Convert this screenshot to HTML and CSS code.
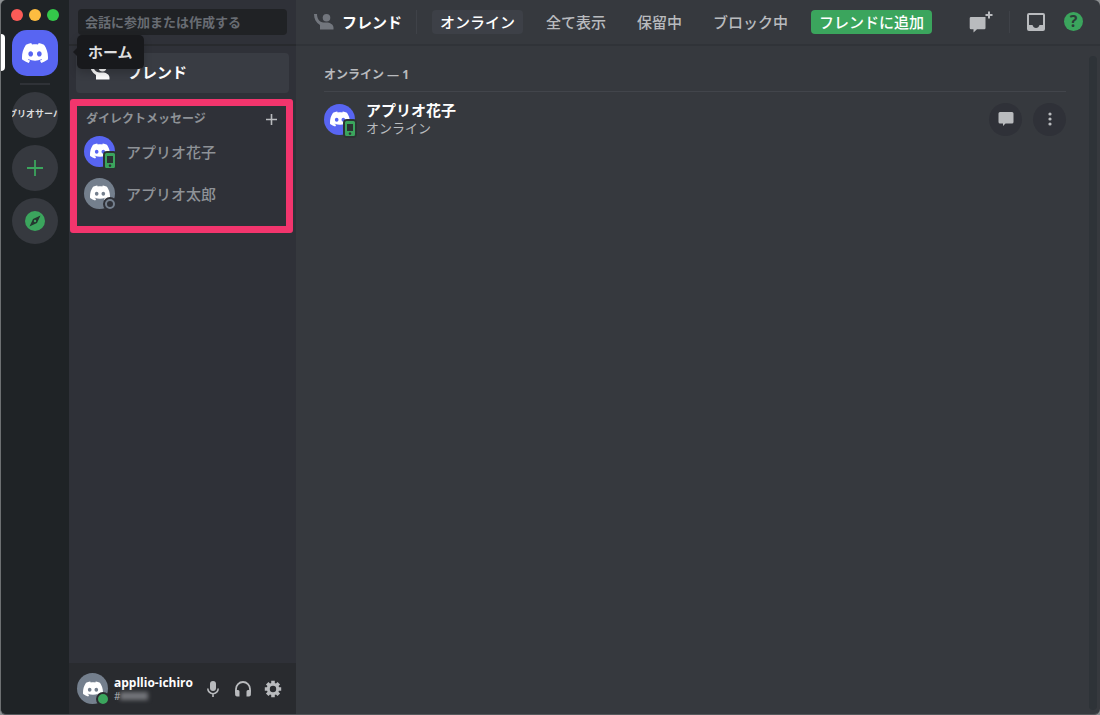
FILE: index.html
```html
<!DOCTYPE html>
<html lang="ja">
<head>
    <meta charset="UTF-8">
    <meta name="viewport" content="width=device-width, initial-scale=1.0">
    <title>フレンド</title>
    <link rel="stylesheet" href="styles.css">
</head>
<body>
    <svg class="symbols" aria-hidden="true">
        <symbol id="logo" viewBox="0 0 24 24">
            <path fill="currentColor" d="M20.317 4.3698a19.7913 19.7913 0 00-4.8851-1.5152.0741.0741 0 00-.0785.0371c-.211.3753-.4447.8648-.6083 1.2495-1.8447-.2762-3.68-.2762-5.4868 0-.1636-.3933-.4058-.8742-.6177-1.2495a.077.077 0 00-.0785-.037 19.7363 19.7363 0 00-4.8852 1.515.0699.0699 0 00-.0321.0277C.5334 9.0458-.319 13.5799.0992 18.0578a.0824.0824 0 00.0312.0561c2.0528 1.5076 4.0413 2.4228 5.9929 3.0294a.0777.0777 0 00.0842-.0276c.4616-.6304.8731-1.2952 1.226-1.9942a.076.076 0 00-.0416-.1057c-.6528-.2476-1.2743-.5495-1.8722-.8923a.077.077 0 01-.0076-.1277c.1258-.0943.2517-.1923.3718-.2914a.0743.0743 0 01.0776-.0105c3.9278 1.7933 8.18 1.7933 12.0614 0a.0739.0739 0 01.0785.0095c.1202.099.246.1981.3728.2924a.077.077 0 01-.0066.1276 12.2986 12.2986 0 01-1.873.8914.0766.0766 0 00-.0407.1067c.3604.698.7719 1.3628 1.225 1.9932a.076.076 0 00.0842.0286c1.961-.6067 3.9495-1.5219 6.0023-3.0294a.077.077 0 00.0313-.0552c.5004-5.177-.8382-9.6739-3.5485-13.6604a.061.061 0 00-.0312-.0286zM8.02 15.3312c-1.1825 0-2.1569-1.0857-2.1569-2.419 0-1.3332.9555-2.4189 2.157-2.4189 1.2108 0 2.1757 1.0952 2.1568 2.419 0 1.3332-.9555 2.4189-2.1569 2.4189zm7.9748 0c-1.1825 0-2.1569-1.0857-2.1569-2.419 0-1.3332.9554-2.4189 2.1569-2.4189 1.2108 0 2.1757 1.0952 2.1568 2.419 0 1.3332-.946 2.4189-2.1568 2.4189Z"/>
        </symbol>
        <symbol id="friends" viewBox="0 0 20 17">
            <circle cx="12.500" cy="4.800" r="3.800" fill="currentColor"/>
            <path fill="currentColor" d="M0 1h3c0 4.500 2.500 8.500 6.500 8.500h3c3.500 0 7 2 7 5v2H6V12C2 9.800 0 6 0 1z"/>
        </symbol>
        <symbol id="chat" viewBox="0 0 16 16">
            <path fill="currentColor" d="M2 1h12a1.500 1.500 0 0 1 1.500 1.500v8.500a1.500 1.500 0 0 1-1.500 1.500H7.500L5 15V12.500H2A1.500 1.500 0 0 1 .5 11V2.500A1.500 1.500 0 0 1 2 1z"/>
        </symbol>
        <symbol id="phone" viewBox="0 0 10 15">
            <path fill="currentColor" fill-rule="evenodd" d="M1.500 0h7A1.500 1.500 0 0 1 10 1.500v12A1.500 1.500 0 0 1 8.500 15h-7A1.500 1.500 0 0 1 0 13.500v-12A1.500 1.500 0 0 1 1.500 0zM2 3v7h6V3zM5 11.300a1.300 1.300 0 1 0 .01 0z"/>
        </symbol>
    </svg>

    <div class="app">
        <nav class="servers">
            <div class="traffic">
                <span class="light red"></span>
                <span class="light yellow"></span>
                <span class="light green"></span>
            </div>
            <div class="home">
                <button class="server home-btn" aria-label="ホーム"><svg class="home-logo"><use href="#logo"/></svg></button>
                <span class="tooltip">ホーム</span>
            </div>
            <hr class="server-line">
            <button class="server server-name"><span>アプリオサーバー</span></button>
            <button class="server" aria-label="サーバーを追加">
                <svg width="16" height="16" viewBox="0 0 16 16"><path d="M8 0v16M0 8h16" stroke="currentColor" stroke-width="1.800"/></svg>
            </button>
            <button class="server" aria-label="サーバーを探す">
                <svg width="20" height="20" viewBox="0 0 20 20"><circle cx="10" cy="10" r="10" fill="currentColor"/><path d="M15.500 4.500L12 12l-7.500 3.500L8 8z" fill="#24372f"/><circle cx="10" cy="10" r="1.200" fill="currentColor"/></svg>
            </button>
        </nav>

        <aside class="sidebar">
            <div class="search">
                <input type="text" placeholder="会話に参加または作成する" aria-label="会話に参加または作成する">
            </div>
            <a href="#" class="friends-link"><svg class="friends-icon"><use href="#friends"/></svg>フレンド</a>

            <section class="messages">
                <div class="messages-head">
                    <h2>ダイレクトメッセージ</h2>
                    <button class="icon-btn" aria-label="DMを作成">
                        <svg width="11" height="11" viewBox="0 0 11 11"><path d="M5.500 0v11M0 5.500h11" stroke="currentColor" stroke-width="1.600"/></svg>
                    </button>
                </div>
                <a href="#" class="dm">
                    <span class="avatar blue"><svg class="avatar-logo"><use href="#logo"/></svg><span class="mobile"><svg width="10" height="15"><use href="#phone"/></svg></span></span>
                    アプリオ花子
                </a>
                <a href="#" class="dm">
                    <span class="avatar"><svg class="avatar-logo"><use href="#logo"/></svg><span class="status offline"></span></span>
                    アプリオ太郎
                </a>
            </section>

            <footer class="user">
                <span class="avatar"><svg class="avatar-logo"><use href="#logo"/></svg><span class="status online"></span></span>
                <div class="user-text">
                    <div class="user-name">appllio-ichiro</div>
                    <div class="user-tag">#<span class="tag-hidden"></span></div>
                </div>
                <button class="icon-btn" aria-label="ミュート">
                    <svg width="18" height="18" viewBox="0 0 18 18"><rect x="6" y="1" width="6" height="10" rx="3" fill="currentColor"/><path d="M3.800 8.500a5.200 5.200 0 0 0 10.400 0M9 13.500V17" fill="none" stroke="currentColor" stroke-width="1.600"/></svg>
                </button>
                <button class="icon-btn" aria-label="スピーカーミュート">
                    <svg width="18" height="18" viewBox="0 0 18 18"><path d="M2 12.500V9a7 7 0 0 1 14 0v3.500" fill="none" stroke="currentColor" stroke-width="1.800"/><path d="M1.100 10H4a1.500 1.500 0 0 1 1.500 1.500v5H3a1.900 1.900 0 0 1-1.900-1.900zM16.900 10H14a1.500 1.500 0 0 0-1.500 1.500v5H15a1.900 1.900 0 0 0 1.900-1.900z" fill="currentColor"/></svg>
                </button>
                <button class="icon-btn" aria-label="ユーザー設定">
                    <svg width="18" height="18" viewBox="0 0 18 18"><g stroke="currentColor" fill="none"><circle cx="9" cy="9" r="4.700" stroke-width="3"/><path stroke-width="3.600" d="M9 .8v3M9 14.200v3M.8 9h3M14.200 9h3M3.200 3.200l2 2M12.800 12.800l2 2M3.200 14.800l2-2M12.800 5.200l2-2"/></g></svg>
                </button>
            </footer>
        </aside>

        <main class="main">
            <header class="topbar">
                <h1><svg class="friends-icon"><use href="#friends"/></svg>フレンド</h1>
                <div class="tabs">
                    <button class="tab active">オンライン</button>
                    <button class="tab">全て表示</button>
                    <button class="tab">保留中</button>
                    <button class="tab">ブロック中</button>
                    <button class="tab add">フレンドに追加</button>
                </div>
                <div class="tools">
                    <button class="icon-btn new-group" aria-label="グループDMを作成">
                        <svg width="24" height="22" viewBox="0 0 24 22"><path fill="currentColor" d="M2 6h14.500v11a1.200 1.200 0 0 1-1.200 1.200H8L4.500 21.500V18.200H2A1.300 1.300 0 0 1 .7 17V7.300A1.300 1.300 0 0 1 2 6z"/><path d="M20 0v8M16 4h8" stroke="#36393f" stroke-width="4"/><path d="M20 .5v7M16.500 4h7" stroke="currentColor" stroke-width="2"/></svg>
                    </button>
                    <button class="icon-btn inbox" aria-label="受信ボックス">
                        <svg width="18" height="18" viewBox="0 0 18 18"><path fill="currentColor" fill-rule="evenodd" d="M2 0h14a2 2 0 0 1 2 2v14a2 2 0 0 1-2 2H2a2 2 0 0 1-2-2V2a2 2 0 0 1 2-2zM2 2v10h3.500c.6 2 1.800 3 3.500 3s2.900-1 3.500-3H16V2z"/></svg>
                    </button>
                    <button class="icon-btn help" aria-label="ヘルプ">?</button>
                </div>
            </header>

            <section class="people">
                <h2>オンライン — 1</h2>
                <div class="person">
                    <span class="avatar blue"><svg class="avatar-logo"><use href="#logo"/></svg><span class="mobile"><svg width="10" height="15"><use href="#phone"/></svg></span></span>
                    <div class="person-text">
                        <div class="person-name">アプリオ花子</div>
                        <div class="person-status">オンライン</div>
                    </div>
                    <button class="round" aria-label="メッセージ"><svg width="16" height="16"><use href="#chat"/></svg></button>
                    <button class="round" aria-label="その他">
                        <svg width="4" height="14" viewBox="0 0 4 14" fill="currentColor"><circle cx="2" cy="2" r="1.600"/><circle cx="2" cy="7" r="1.600"/><circle cx="2" cy="12" r="1.600"/></svg>
                    </button>
                </div>
                <span class="scrollbar"></span>
            </section>
        </main>
    </div>
</body>
</html>
```

FILE: styles.css
```css
* {
    margin: 0;
    padding: 0;
    box-sizing: border-box;
}

body {
    font-family: "Open Sans", "Noto Sans CJK JP", sans-serif;
    font-size: 15px;
    color: #b9bbbe;
    background: #8d9092;
}

button {
    font: inherit;
    color: inherit;
    background: none;
    border: none;
    cursor: pointer;
}

a {
    color: inherit;
    text-decoration: none;
}

svg {
    display: block;
    flex: none;
}

.symbols {
    position: absolute;
    width: 0;
    height: 0;
}

.app {
    display: flex;
    height: 100vh;
    border-left: 1px solid #6d7072;
    border-bottom: 1px solid #55585c;
    border-radius: 6px;
    overflow: hidden;
    background: #36393e;
}

/* server list */
.servers {
    width: 68px;
    flex: none;
    display: flex;
    flex-direction: column;
    align-items: center;
    background: #1f2326;
}

.traffic {
    display: flex;
    gap: 6px;
    padding: 9px 0;
}

.light {
    width: 12px;
    height: 12px;
    border-radius: 50%;
}

.red {
    background: #fc5b57;
}

.yellow {
    background: #fdbc40;
}

.green {
    background: #34c84a;
}

.home {
    position: relative;
    width: 100%;
    display: flex;
    justify-content: center;
}

.home::before {
    content: "";
    position: absolute;
    left: 0;
    top: 4px;
    width: 4px;
    height: 37px;
    border-radius: 0 4px 4px 0;
    background: #fff;
}

.server {
    width: 46px;
    height: 46px;
    flex: none;
    display: flex;
    justify-content: center;
    align-items: center;
    border-radius: 50%;
    margin-bottom: 7px;
    background: #36393f;
    color: #3ba55d;
    overflow: hidden;
}

.home-btn {
    border-radius: 15px;
    background: #5865f2;
    color: #fff;
}

.home-logo {
    width: 26px;
    height: 26px;
}

.tooltip {
    position: absolute;
    z-index: 1;
    left: 76px;
    top: 5px;
    padding: 0 11px;
    line-height: 34px;
    border-radius: 5px;
    background: #18191c;
    color: #dcddde;
    font-weight: bold;
    white-space: nowrap;
    box-shadow: 0 4px 8px rgba(0, 0, 0, 0.2);
}

.tooltip::before {
    content: "";
    position: absolute;
    left: -4px;
    top: 13px;
    border: 4px solid transparent;
    border-left: none;
    border-right-color: #18191c;
}

.server-line {
    width: 30px;
    height: 2px;
    border: none;
    margin-bottom: 7px;
    background: #2f3237;
}

.server-name {
    padding-bottom: 4px;
    font-size: 9px;
    font-weight: bold;
    color: #dcddde;
    white-space: nowrap;
}

/* sidebar */
.sidebar {
    width: 227px;
    flex: none;
    display: flex;
    flex-direction: column;
    background: #2f3138;
}

.search {
    height: 46px;
    flex: none;
    padding: 9px;
    border-bottom: 2px solid #282a2e;
}

.search input {
    display: block;
    width: 100%;
    height: 26px;
    padding: 0 7px;
    border: none;
    border-radius: 4px;
    background: #202225;
    color: #dcddde;
    font: bold 13px "Open Sans", "Noto Sans CJK JP", sans-serif;
}

.search input::placeholder {
    color: #686c73;
}

.friends-icon {
    width: 20px;
    height: 17px;
}

.friends-link {
    display: flex;
    align-items: center;
    gap: 17px;
    height: 40px;
    flex: none;
    margin: 7px 7px 6px;
    padding: 0 14px 3px;
    border-radius: 4px;
    background: #393c43;
    color: #fff;
    font-weight: bold;
}

.messages {
    margin: 0 3px 0 1px;
    padding: 2px 7px 12px;
    border: 7px solid #f2356d;
    border-radius: 3px;
}

.messages-head {
    display: flex;
    align-items: center;
    justify-content: space-between;
    height: 22px;
    padding: 0 2px;
}

.messages-head h2 {
    font-size: 12px;
    line-height: 22px;
    color: #8e9297;
}

.icon-btn {
    display: flex;
    align-items: center;
    justify-content: center;
    color: #b9bbbe;
}

.dm {
    display: flex;
    align-items: center;
    gap: 11px;
    height: 42px;
    color: #8e9297;
    font-weight: 500;
}

.avatar {
    position: relative;
    width: 31px;
    height: 31px;
    flex: none;
    display: flex;
    align-items: center;
    justify-content: center;
    border-radius: 50%;
    background: #747f8d;
    color: #fff;
}

.blue {
    background: #5865f2;
}

.avatar-logo {
    width: 20px;
    height: 20px;
}

.mobile {
    position: absolute;
    right: -2px;
    bottom: -3px;
    padding: 2px;
    border-radius: 4px;
    background: #2c3333;
    color: #3ba55d;
}

.status {
    position: absolute;
    right: -2px;
    bottom: -2px;
    width: 14px;
    height: 14px;
    border: 2px solid #2f3138;
    border-radius: 50%;
    background: #3ba55d;
}

.status.offline {
    background: #2f3138;
}

.offline::before {
    content: "";
    display: block;
    box-sizing: border-box;
    width: 10px;
    height: 10px;
    border: 2px solid #747f8d;
    border-radius: 50%;
}

.user {
    display: flex;
    align-items: center;
    height: 51px;
    margin-top: auto;
    padding: 0 8px;
    background: #292b2f;
}

.user .status {
    border-color: #292b2f;
}

.user .icon-btn {
    width: 30px;
    height: 30px;
}

.user-text {
    flex: 1;
    margin-left: 6px;
}

.user-name {
    font-size: 12px;
    font-weight: bold;
    line-height: 15px;
    color: #fff;
    white-space: nowrap;
}

.user-tag {
    display: flex;
    align-items: center;
    font-size: 10px;
    line-height: 12px;
}

/* number is masked */
.tag-hidden {
    width: 28px;
    height: 8px;
    background: #73757a;
    filter: blur(2px);
}

/* main */
.main {
    flex: 1;
    min-width: 0;
    display: flex;
    flex-direction: column;
}

.topbar {
    display: flex;
    align-items: center;
    height: 46px;
    flex: none;
    padding: 0 17px 1px 18px;
    border-bottom: 2px solid #303338;
}

.topbar h1 {
    display: flex;
    align-items: center;
    gap: 8px;
    padding-right: 14px;
    border-right: 1px solid #3f4248;
    font-size: 15px;
    line-height: 24px;
    color: #fff;
}

.topbar h1 svg {
    color: #72767d;
}

.tabs {
    display: flex;
    gap: 15px;
    margin-left: 15px;
}

.tab {
    padding: 0 8px;
    border-radius: 4px;
    font-size: 15px;
    font-weight: 500;
    line-height: 24px;
    white-space: nowrap;
}

.tab.active {
    background: #3d4047;
    color: #fff;
}

.tab.add {
    background: #3ba55d;
    color: #fff;
}

.tools {
    display: flex;
    align-items: center;
    margin-left: auto;
}

.new-group {
    padding-right: 16px;
    border-right: 1px solid #3f4248;
}

.inbox {
    margin: 0 19px 0 17px;
}

.help {
    width: 19px;
    height: 19px;
    border-radius: 50%;
    background: #3ba55d;
    color: #2b3d38;
    font-size: 16px;
    font-weight: bold;
    line-height: 19px;
}

.people {
    position: relative;
    flex: 1;
    padding: 19px 34px 0 28px;
}

.people h2 {
    padding-bottom: 6px;
    border-bottom: 1px solid #42454b;
    font-size: 12px;
    line-height: 20px;
}

.person {
    display: flex;
    align-items: center;
    gap: 11px;
    height: 54px;
}

.person-text {
    flex: 1;
}

.person-name {
    font-weight: bold;
    line-height: 18px;
    color: #fff;
}

.person-status {
    font-size: 13px;
    line-height: 18px;
}

.round {
    width: 33px;
    height: 33px;
    display: flex;
    align-items: center;
    justify-content: center;
    border-radius: 50%;
    background: #2f3138;
}

.scrollbar {
    position: absolute;
    top: 10px;
    right: 3px;
    bottom: 4px;
    width: 8px;
    border-radius: 4px;
    background: #2e3338;
}
```
